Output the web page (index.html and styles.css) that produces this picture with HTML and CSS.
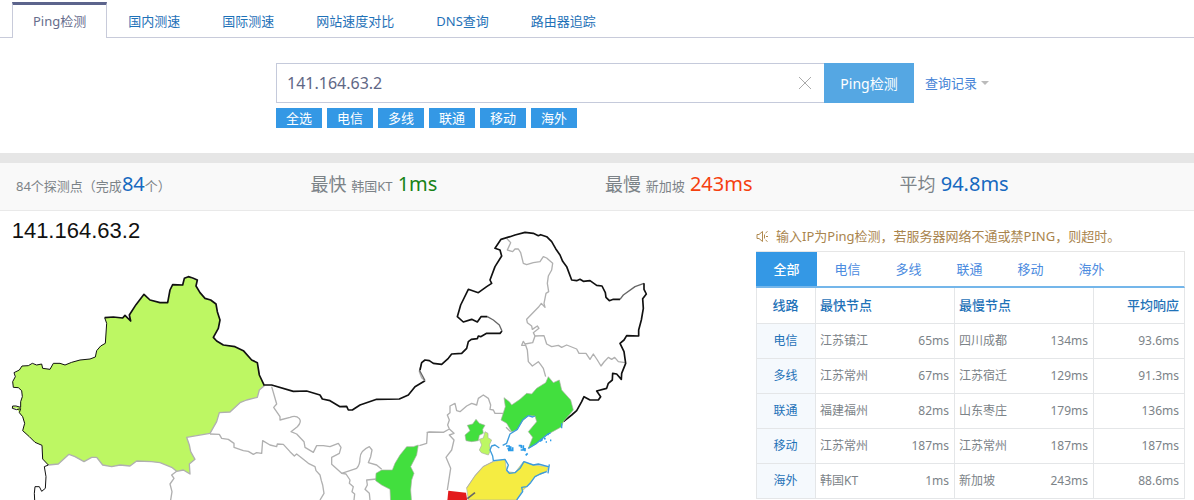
FILE: index.html
```html
<!DOCTYPE html>
<html lang="zh-CN">
<head>
    <meta charset="UTF-8">
    <meta name="viewport" content="width=device-width, initial-scale=1.0">
    <title>Ping检测</title>
    <link rel="stylesheet" href="styles.css">
</head>
<body>
    <!-- Top tabs -->
    <nav class="tool-nav">
        <a href="#" class="active">Ping检测</a>
        <a href="#">国内测速</a>
        <a href="#">国际测速</a>
        <a href="#">网站速度对比</a>
        <a href="#">DNS查询</a>
        <a href="#">路由器追踪</a>
    </nav>

    <!-- Search -->
    <form class="search">
        <div class="search-row">
            <div class="search-box">
                <input type="text" class="search-input" value="141.164.63.2" aria-label="IP">
                <button type="button" class="clear-btn" aria-label="清空">
                    <svg width="14" height="14" viewBox="0 0 14 14"><path d="M1 1L13 13M13 1L1 13" stroke="#aaa" fill="none"/></svg>
                </button>
            </div>
            <button type="button" class="search-btn">Ping检测</button>
            <a href="#" class="record-link">查询记录<span class="caret"></span></a>
        </div>
        <div class="line-tags">
            <button type="button">全选</button>
            <button type="button">电信</button>
            <button type="button">多线</button>
            <button type="button">联通</button>
            <button type="button">移动</button>
            <button type="button">海外</button>
        </div>
    </form>

    <!-- Summary -->
    <section class="summary">
        <p>84个探测点（完成<b class="blue">84</b>个）</p>
        <p><span class="label">最快 </span>韩国KT<b class="green"> 1ms</b></p>
        <p><span class="label">最慢 </span>新加坡<b class="red"> 243ms</b></p>
        <p><span class="label">平均</span><b class="blue"> 94.8ms</b></p>
    </section>

    <main class="result">
        <!-- Map -->
        <svg class="map" viewBox="0 0 2268 867">
            <text class="map-title" x="35" y="80">141.164.63.2</text>

            <!-- west -->
            <g transform="translate(0 147)">
                <path class="fill-lime" d="M145 615L128 597L126 556L105 547L88 530L68 512L74 490L68 470L58 458L50 445L37 445L38 438L48 440L62 442L62 425L67 410L65 392L55 383L40 382L38 365L46 350L45 338L58 330L66 318L85 317L97 312L110 315L125 312L128 325L150 328L160 310L180 310L195 315L215 307L240 300L270 297L286 291L290 272L302 258L316 250L320 190L314 173L370 172L375 165L392 183L388 165L432 103L450 120L480 128L503 128L510 90L518 74L548 75L553 55L565 50L578 58L592 60L588 78L600 98L615 115L632 120L648 132L652 155L660 180L655 205L640 232L650 243L670 255L705 260L730 272L755 300L772 308L778 345L793 377L778 390L772 412L740 420L720 428L690 456L658 458L650 485L630 520L560 532L568 555L572 575L585 598L568 612L570 642L550 630L530 634L515 622L480 608L455 605L410 603L390 618L360 615L335 620L308 615L290 592L275 592L252 605L225 590L207 583L175 612Z"/>
                <path class="province" d="M793 377L778 390L772 412L740 420L720 428L690 456L658 458L650 485L630 520L560 532L568 555L572 575L585 598L568 612L570 642L550 630L530 634L515 622L480 608L455 605L410 603L390 618L360 615L335 620L308 615L290 592L275 592L252 605L225 590L207 583L175 612L145 615"/>
                <path class="province" d="M530 634L515 645L522 655L510 672L516 695L512 720"/>
                <path class="border border-thin" d="M104 720L103 700L105 680L118 680L125 694L136 685L138 650L133 620L145 615L128 597L126 556L105 547L88 530L68 512L74 490L68 470L58 458L62 446L50 449L37 445L38 438L48 438L62 442L62 425L67 410L65 392L55 383L40 382L38 365L46 350L42 338L58 330L66 318L85 317L97 310L110 315L125 312L128 325L150 328L160 310L180 310L195 315L215 307L240 300L270 297L286 291L290 272L302 258L316 250L320 190L314 173"/>
                <path class="border" d="M314 173L340 171L368 174L375 166L392 183L388 165L408 134L432 103L450 120L480 128L503 128L510 90L518 74L548 75L553 55L565 50L578 54L592 60L588 78L600 98L615 115L632 120L648 132L652 155L660 180L655 205L640 232L650 243L670 255L705 260L730 272L755 300L772 308L778 345L793 377"/>
            </g>

            <!-- north-west -->
            <g transform="translate(480 357)">
                <path class="province" d="M150 312L178 313L185 325L205 328L222 340L222 352L250 362L265 364L280 373L290 368L305 370L308 332L330 345L350 350L352 342L370 343L390 365L403 378L410 372L430 388L445 400L465 410L468 422L480 435L484 452L488 465L492 490L480 510"/>
                <path class="province" d="M335 170L350 222L341 232L360 260L360 270L390 262Q408 255 418 266Q426 276 412 290L393 305L410 312L432 335L435 352L460 367L470 347L490 347L510 350L535 340L543 352L538 370L515 382L515 403L545 430L590 415Q600 405 600 385Q600 362 628 350L636 360L632 380L625 398L650 405L665 418"/>
                <path class="province" d="M545 430L558 432L570 450L568 460L580 470L576 485L584 492L582 510M650 447L620 450L622 465L615 478L628 490L630 510M778 347L800 340L802 308L808 306L850 307"/>
                <path class="fill-green province-edge" d="M775 345L760 350L740 350L720 375L705 400L697 420L665 420L648 430L647 452L665 465L690 478L692 520L755 520L752 480L755 450L762 430L752 410L770 375Z"/>
                <path class="border" d="M313 165L335 165L400 184L440 183L480 195L487 207L510 212L540 230L560 229L565 240L577 240L600 225L650 208L718 207L745 195L765 170L795 152"/>
                <path class="province" d="M795 152L785 143L778 125L785 98"/>
            </g>

            <!-- north-east -->
            <g transform="translate(1200 27)">
                <path class="province" d="M320 55L332 68L322 90L338 95L345 87L355 87L362 98L370 130L380 134L400 128L420 125L430 110L440 114L458 130L455 150L445 168L442 190L446 215L438 220L432 250L435 262L424 250L415 262L380 298L382 308L395 318L397 328L412 318L417 325L400 338L405 348L432 347L440 372L455 380L475 376L485 382L500 375L530 387L537 400L558 400L570 418L580 402L592 420L603 438L612 426L625 412L635 418L644 412L655 425L675 428"/>
                <path class="province" d="M405 348L398 368L375 372L370 364L365 376L377 376L382 390L385 425L397 438L415 425L422 434L430 445L437 470"/>
                <path class="province dark" d="M75 482L58 450"/>
                <path class="border" d="M60 450L65 428L75 420L88 422L100 430L125 433L145 415L155 402L185 400L200 385L205 365L214 358L232 356L235 348L242 350L260 340L300 340L306 333"/>
                <path class="province dark" d="M306 333L298 315L280 300L262 290"/>
                <path class="border" d="M262 290L243 290L232 306L215 298L190 306L172 290L182 255L205 208L235 218L260 200L275 190L270 180L285 140L305 108L300 90L285 85L303 58L330 50L345 45L375 37L400 40L415 47L422 44L440 50L455 65L467 86L480 105L488 124L500 140L515 180L530 182L540 178L550 184L570 182L590 196L606 198L616 218L618 232L628 242L640 238L660 238"/>
                <path class="province dark" d="M660 238L670 225L705 200L732 190"/>
                <path class="border" d="M732 190L732 208L739 222L728 236L730 265L724 300L716 330L716 348L680 347L672 360L660 370L672 395L677 430L665 460L664 478L650 462L638 460L637 480L625 490L620 505L590 513L602 530L595 540L570 540L552 530L545 545L530 572L515 585L490 605"/>
            </g>

            <!-- Bohai -->
            <g transform="translate(1080 477)">
                <path class="province" d="M200 187L250 187L268 177M430 130L405 130L400 120L390 118L392 105L385 85L370 75L355 85L350 105L335 100L320 108L300 125L290 122L285 100L270 108L270 128L262 135L268 150L263 165L268 177L282 190L268 195L282 210L275 240L258 262L272 295L262 360M438 172L452 185M400 275L370 290L345 318L320 355"/>
                <path class="fill-green province-edge" d="M565 20L557 38L530 55L515 72L500 70L480 88L455 105L448 95L432 83L436 110L423 150L440 160L455 185L470 180L490 150L505 137L525 138L530 155L505 185L518 202L505 235L530 220L560 195L605 170L610 155L640 120L632 90L605 60L598 30L580 38Z"/>
                <path class="fill-green province-edge" d="M348 148L338 162L322 166L330 182L315 195L318 212L335 215L355 212L358 196L370 190L368 178L375 166L358 160Z"/>
                <path class="fill-lime province-edge" d="M375 185L370 204L358 208L365 225L358 240L364 248L385 255L392 240L388 225L395 210L384 203L384 190Z"/>
                <path class="fill-yellow province-edge" d="M400 275L435 268L440 305L465 308L490 275L520 285L565 290L560 305L525 320L500 350L485 365L470 390L325 390L320 355L345 318L370 290Z"/>
                <path class="fill-red" d="M265 362L318 368L322 392L262 392Z"/>
                <path class="province dark wide" d="M322 386L345 368"/>
                <path class="coast" d="M525 138L518 141L505 137L488 150L472 178L450 192L440 220L428 226M418 234L405 225L395 228L390 240L398 258L400 272L435 268L445 285L440 300L448 310L465 308L480 295L492 275L520 285L535 282L565 290M568 283L564 310M560 305L540 312L525 320L512 338L500 350L485 352L488 365L470 390M605 160V175M572 188L560 195L530 220L505 235"/>
                <path class="islands" d="M438 228h10v8h-6M452 229v14M458 232v12M444 241h12M476 227h8v8M482 240h12M490 226v12M495 234v10M497 256l6-6M541 211h4M552 206h5M557 216h4M570 211h4M562 193h4M548 208l-8 6"/>
            </g>
        </svg>

        <!-- Line results -->
        <aside class="panel">
            <p class="notice">
                <svg width="13" height="13" viewBox="0 0 13 13" fill="none" stroke="#b08a50"><path d="M1 4.5H3L6.500 1.500V11.500L3 8.500H1ZM8.500 4.500V8.500M9.500 3L11.500 1.500M10 6.500H12M9.500 10L11.500 11.500"/></svg>
                输入IP为Ping检测，若服务器网络不通或禁PING，则超时。
            </p>
            <div class="line-tabs">
                <a href="#" class="active">全部</a>
                <a href="#">电信</a>
                <a href="#">多线</a>
                <a href="#">联通</a>
                <a href="#">移动</a>
                <a href="#">海外</a>
            </div>
            <table class="line-table">
                <colgroup>
                    <col class="col-line"><col class="col-node"><col class="col-ms"><col class="col-node"><col class="col-ms"><col class="col-avg">
                </colgroup>
                <thead>
                    <tr>
                        <th class="line">线路</th>
                        <th colspan="2">最快节点</th>
                        <th colspan="2">最慢节点</th>
                        <th class="ms">平均响应</th>
                    </tr>
                </thead>
                <tbody>
                    <tr><th class="line">电信</th><td>江苏镇江</td><td class="ms">65ms</td><td>四川成都</td><td class="ms">134ms</td><td class="ms">93.6ms</td></tr>
                    <tr><th class="line">多线</th><td>江苏常州</td><td class="ms">67ms</td><td>江苏宿迁</td><td class="ms">129ms</td><td class="ms">91.3ms</td></tr>
                    <tr><th class="line">联通</th><td>福建福州</td><td class="ms">82ms</td><td>山东枣庄</td><td class="ms">179ms</td><td class="ms">136ms</td></tr>
                    <tr><th class="line">移动</th><td>江苏常州</td><td class="ms">187ms</td><td>江苏常州</td><td class="ms">187ms</td><td class="ms">187ms</td></tr>
                    <tr><th class="line">海外</th><td>韩国KT</td><td class="ms">1ms</td><td>新加坡</td><td class="ms">243ms</td><td class="ms">88.6ms</td></tr>
                </tbody>
            </table>
        </aside>
    </main>
</body>
</html>
```
FILE: styles.css
```css
* {
    margin: 0;
    padding: 0;
    box-sizing: border-box;
}

body {
    font-family: "Noto Sans", "Noto Sans CJK SC", sans-serif;
    font-size: 13px;
    line-height: 20px;
    color: #7c8388;
    background: #fff;
}

a {
    color: #1f72b8;
    text-decoration: none;
}

button,
input {
    font-family: inherit;
    border: none;
}

/* Top tabs */
.tool-nav {
    display: flex;
    padding: 2px 12px 0;
    box-shadow: inset 0 -1px #c8cbda;
}

.tool-nav a {
    height: 36px;
    padding: 6px 20px;
    border: 1px solid transparent;
    border-top-width: 3px;
    border-bottom: none;
}

.tool-nav .active {
    color: #666d8c;
    background: #fff;
    border-color: #5c648c #c8cbda;
}

/* Search */
.search {
    max-width: 642px;
    margin: 0 auto;
    padding: 25px 0;
}

.search-row {
    display: flex;
    align-items: center;
    height: 40px;
}

.search-box {
    display: flex;
    align-items: center;
    flex: 0 0 548px;
    height: 40px;
    border: 1px solid #c5cadb;
    border-right: none;
}

.search-input {
    flex: 1;
    min-width: 0;
    height: 38px;
    padding: 0 10px;
    font-size: 16px;
    color: #5f6785;
    outline: none;
}

.clear-btn {
    display: flex;
    padding: 0 12px;
    background: none;
    cursor: pointer;
}

.search-btn {
    flex: 0 0 90px;
    height: 40px;
    font-size: 14px;
    color: #fff;
    background: #55a7e3;
    cursor: pointer;
}

.record-link {
    display: flex;
    align-items: center;
    gap: 4px;
    margin-left: 11px;
    white-space: nowrap;
    color: #4583d6;
}

.caret {
    border: 4px solid transparent;
    border-top-color: #bbb;
    border-bottom: none;
}

.line-tags {
    display: flex;
    gap: 5px;
    margin-top: 5px;
}

.line-tags button {
    width: 46px;
    height: 20px;
    font-size: 13px;
    line-height: 20px;
    color: #fff;
    background: #3498e5;
    cursor: pointer;
}

/* Summary */
.summary {
    display: grid;
    grid-template-columns: repeat(4, 1fr);
    padding-left: 16px;
    border-top: 10px solid #e6e6e6;
    border-bottom: 1px solid #e9e9e9;
    background: #f9f9f9;
}

.summary p {
    line-height: 47px;
    white-space: nowrap;
}

.summary b {
    font-size: 20px;
    font-weight: 400;
    line-height: 20px;
}

.summary .label {
    font-size: 18px;
    line-height: 20px;
}

.blue {
    color: #1769c0;
}

.green {
    color: #178217;
}

.red {
    color: #f5400f;
}

/* Result */
.result {
    display: grid;
    grid-template-columns: 1fr 429px;
    align-items: start;
    padding-right: 9px;
}

.map {
    display: block;
    width: 100%;
}

.map-title {
    font-family: "Liberation Sans", Arial, sans-serif;
    font-size: 66px;
    fill: #111;
}

.border,
.province,
.coast,
.islands {
    fill: none;
    stroke-linejoin: round;
}

.border {
    stroke: #111;
    stroke-width: 5;
}

.border-thin {
    stroke-width: 3;
}

.province {
    stroke: #b0b0b0;
    stroke-width: 4;
}

.province.dark {
    stroke: #666;
}

.province.wide {
    stroke-width: 5;
}

.province-edge {
    stroke: #aab0a4;
    stroke-width: 2;
}

.coast {
    stroke: #3c9bdc;
    stroke-width: 4;
}

.islands {
    stroke: #2b9be8;
    stroke-width: 5;
}

.fill-lime {
    fill: #bdf763;
}

.fill-green {
    fill: #42df3e;
}

.fill-yellow {
    fill: #f5ec42;
}

.fill-red {
    fill: #e31a1c;
}

/* Line results */
.notice {
    display: flex;
    align-items: center;
    gap: 7px;
    padding: 15px 0 5px;
    white-space: nowrap;
    color: #a9844d;
}

.line-tabs {
    display: flex;
    border: 1px solid #e6e6e6;
    border-left: none;
    border-bottom: 2px solid #74b6ea;
}

.line-tabs a {
    width: 61px;
    line-height: 34px;
    text-align: center;
    color: #4b8be0;
}

.line-tabs .active {
    font-weight: 500;
    color: #fff;
    background: #3498e5;
}

.line-table {
    width: 100%;
    table-layout: fixed;
    border-collapse: collapse;
    font-size: 12px;
}

.line-table th,
.line-table td {
    height: 35px;
    padding: 0 5px 0 4px;
    border-bottom: 1px solid #e4e6e8;
    text-align: left;
    white-space: nowrap;
}

.line-table th {
    font-weight: 400;
    color: #1f72b8;
}

.line-table thead th {
    font-size: 13px;
    font-weight: 500;
    border-right: 1px solid #e4e6e8;
}

.line-table .ms {
    text-align: right;
    border-right: 1px solid #e4e6e8;
}

.line-table .line {
    text-align: center;
    border-left: 1px solid #e4e6e8;
    border-right: 1px solid #e4e6e8;
}

.line-table tbody .line {
    background: #f5f9fd;
}

.col-line {
    width: 59px;
}

.col-node {
    width: 78px;
}

.col-ms {
    width: 61px;
}
```
